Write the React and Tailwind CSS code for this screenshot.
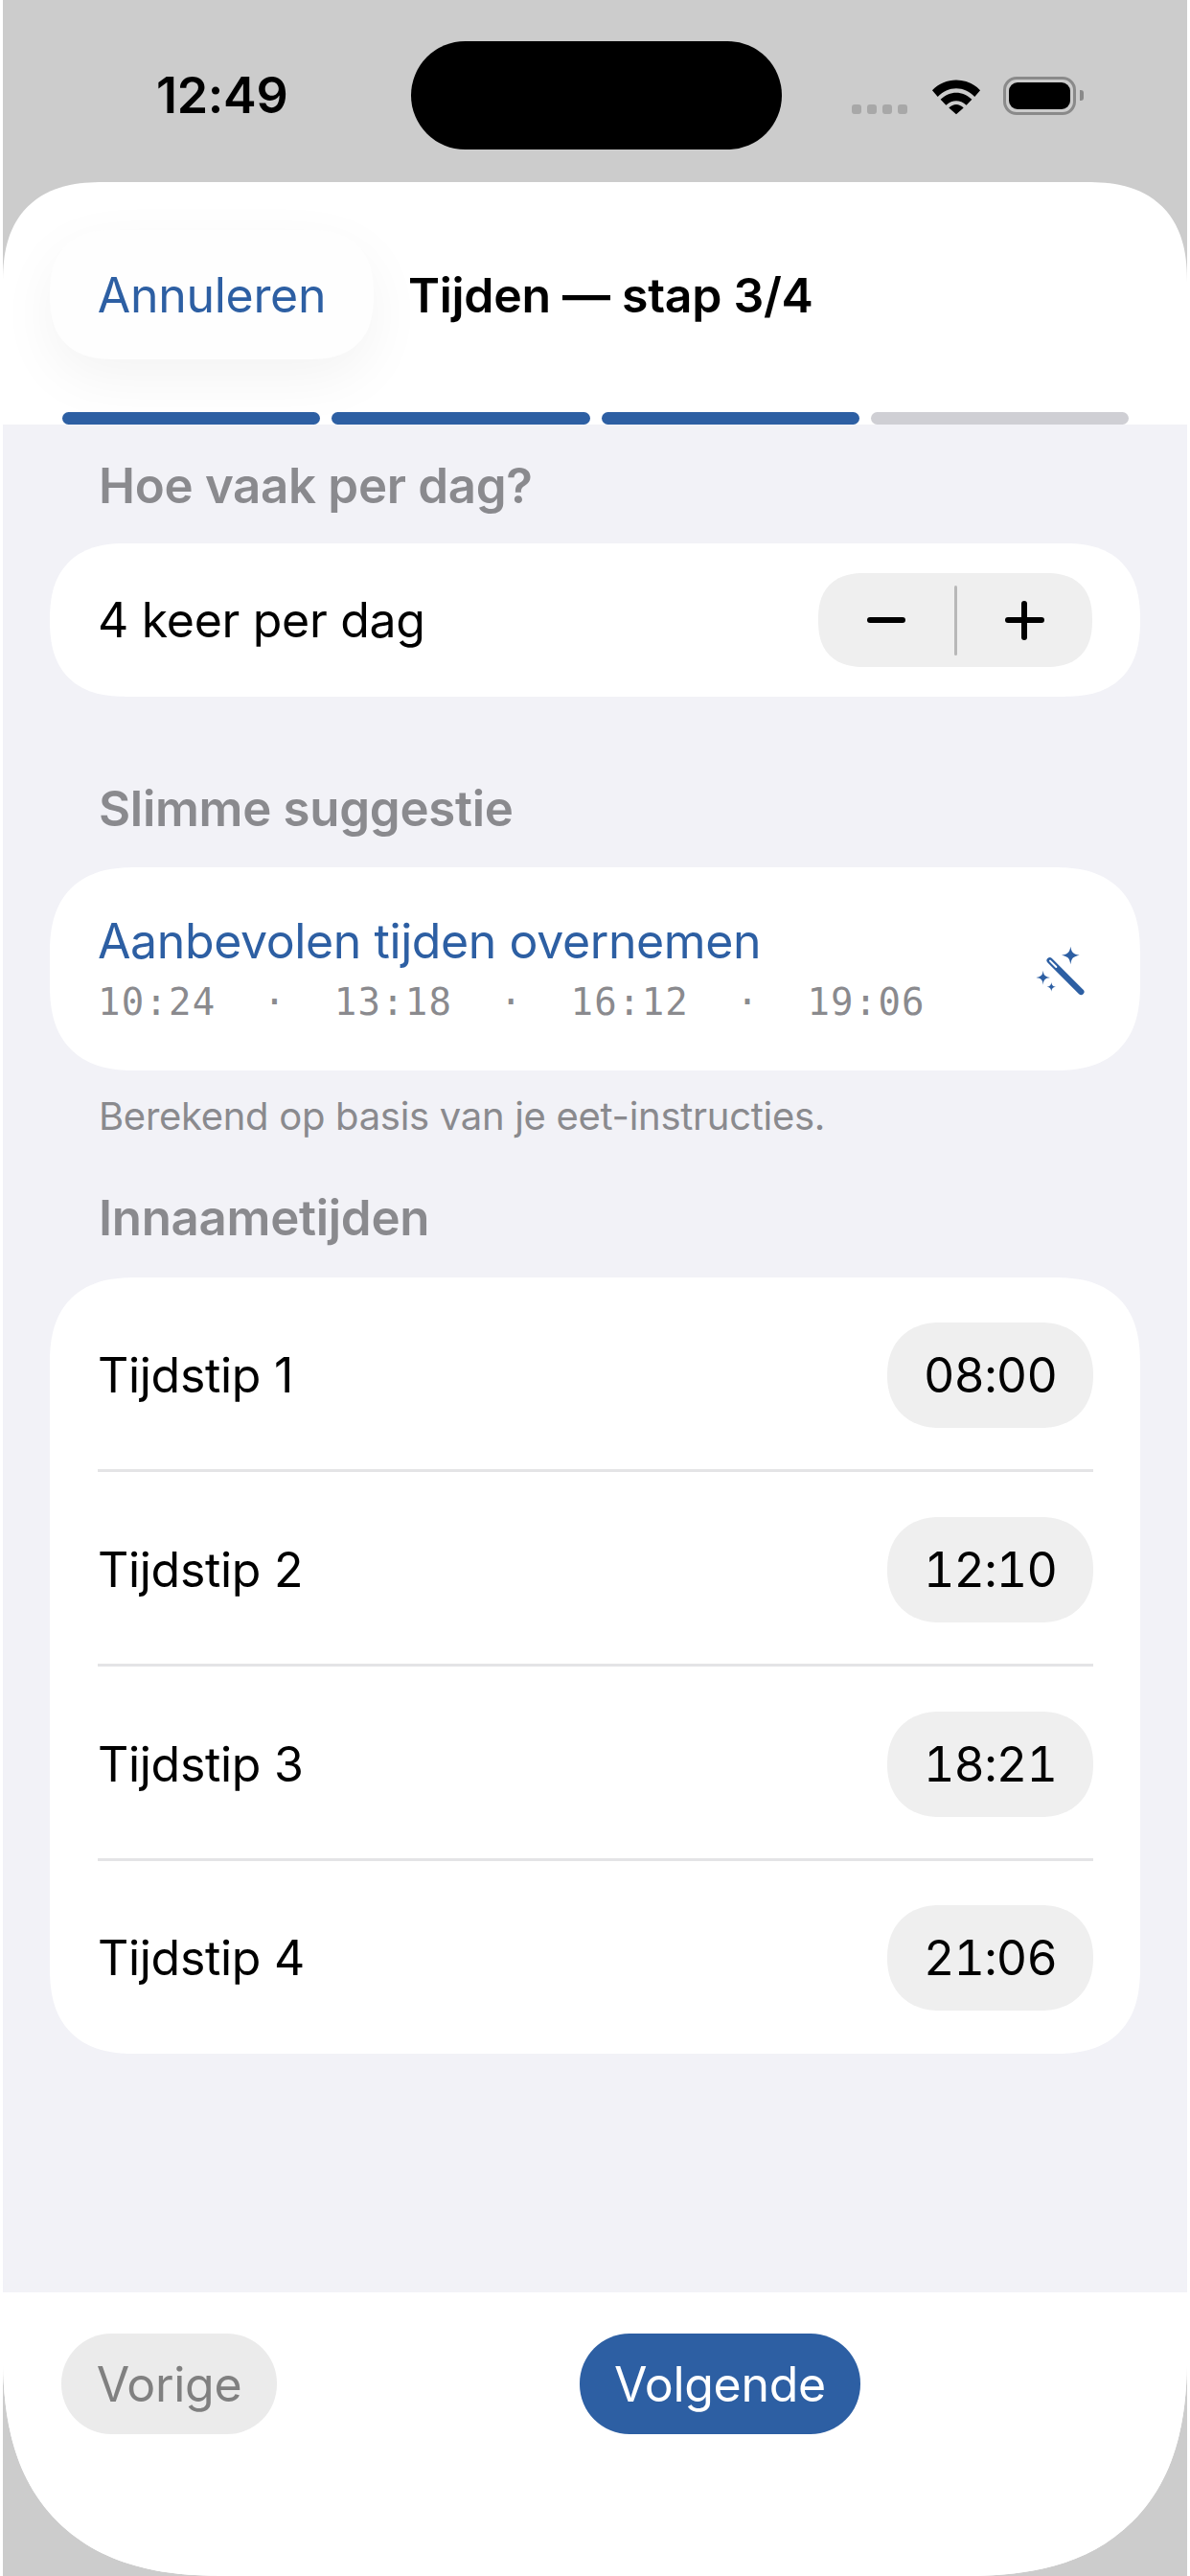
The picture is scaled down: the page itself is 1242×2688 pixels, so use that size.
const inter = { fontFamily: '"Inter", "Liberation Sans", sans-serif' };

function Wand() {
  return (
    <svg width="140" height="100" viewBox="0 0 420 300" className="-my-5 -mr-[29px] -ml-[44px] shrink-0">
      <path d="M197 124 L295 222" stroke="#2d5fa3" strokeWidth="19" strokeLinecap="round" fill="none" />
      <path d="M198 125 L217 144" stroke="#fff" strokeWidth="6" strokeLinecap="round" fill="none" />
      <path d="M262 80 C265 98 270 103 290 107 C270 111 265 116 262 136 C259 116 254 111 234 107 C254 103 259 98 262 80Z" fill="#2d5fa3" />
      <path d="M176 155 C178 170 181 174 198 177 C181 180 178 184 176 200 C174 184 171 180 154 177 C171 174 174 170 176 155Z" fill="#2d5fa3" />
      <path d="M202 191 C203 201 206 204 216 206 C206 208 203 211 202 221 C201 211 198 208 188 206 C198 204 201 201 202 191Z" fill="#2d5fa3" />
    </svg>
  );
}

function Row({ label, time, last }) {
  return (
    <div className={"flex items-center justify-between relative " + (last ? "h-[201px]" : "h-[203px]")}>
      <span className="text-[50px] leading-none text-black">{label}</span>
      <span className="w-[215px] h-[110px] rounded-[55px] bg-[#efefef] flex items-center justify-center text-[50px] leading-none tracking-[-0.8px] text-black tabular-nums [corner-shape:superellipse(1.15)]">
        {time}
      </span>
      {!last && <div className="absolute left-0 right-0 bottom-0 h-[3px] bg-[#e4e4e6]" />}
    </div>
  );
}

function Label({ children, className }) {
  return <div className={"text-[51px] leading-[60px] font-semibold text-[#8a8a8e] pl-[100px] " + className}>{children}</div>;
}

export default function App() {
  return (
    <div style={inter} className="w-[1242px] h-[2688px] bg-white px-[3px] overflow-hidden tracking-[-0.3px]">
      <div className="h-full bg-[#cccccc] flex flex-col">
        {/* status bar */}
        <div className="h-[190px] shrink-0 relative">
          <div className="absolute left-[160px] top-[72px] text-[52px] leading-[56px] font-semibold text-black">12:49</div>
          <div className="absolute left-[426px] top-[43px] w-[387px] h-[113px] rounded-[57px] bg-black" />
          <div className="absolute left-[886px] top-[109px] flex gap-[6px]">
            <div className="w-[10px] h-[10px] rounded-[3px] bg-[#a8a8a8]" />
            <div className="w-[10px] h-[10px] rounded-[3px] bg-[#a8a8a8]" />
            <div className="w-[10px] h-[10px] rounded-[3px] bg-[#a8a8a8]" />
            <div className="w-[10px] h-[10px] rounded-[3px] bg-[#a8a8a8]" />
          </div>
          <svg className="absolute left-[969px] top-[80px]" width="52" height="40" viewBox="0 0 54 40">
            <path d="M1 14 C15 -1 39 -1 53 14 L47 21 C36 9 18 9 7 21Z" fill="#000" />
            <path d="M10 24 C20 14 34 14 44 24 L38 30 C31 24 23 24 16 30Z" fill="#000" />
            <path d="M19 33 C24 28 30 28 35 33 L27 40Z" fill="#000" />
          </svg>
          <div className="absolute left-[1044px] top-[80px] w-[76px] h-[40px] rounded-[14px] border-[3px] border-[#8a8a8a] p-[3px]">
            <div className="w-full h-full rounded-[9px] bg-black" />
          </div>
          <div className="absolute left-[1124px] top-[94px] w-[4px] h-[11px] rounded-r-[3px] bg-[#8a8a8a]" />
        </div>

        {/* sheet */}
        <div className="flex-1 bg-white rounded-t-[105px] rounded-b-[232px] [corner-shape:superellipse(1.3)] overflow-hidden flex flex-col">
          <div className="h-[253px] shrink-0 flex flex-col">
            <div className="flex items-center pl-[49px] pt-[50px]">
              <div className="w-[338px] h-[135px] rounded-[67px] bg-[#fefefe] shadow-[0_20px_60px_rgba(0,0,0,0.05)] [corner-shape:superellipse(1.3)] flex items-center justify-center text-[50px] leading-none text-[#2d5fa3]">
                Annuleren
              </div>
              <div className="ml-[36px] text-[50px] leading-none font-semibold text-black">Tijden — stap 3/4</div>
            </div>
            <div className="mt-auto flex gap-[12px] pl-[62px] pr-[61px]">
              <div className="flex-1 h-[13px] rounded-full bg-[#2d5fa3]" />
              <div className="flex-1 h-[13px] rounded-full bg-[#2d5fa3]" />
              <div className="flex-1 h-[13px] rounded-full bg-[#2d5fa3]" />
              <div className="flex-1 h-[13px] rounded-full bg-[#cfcfd4]" />
            </div>
          </div>

          <div className="flex-1 bg-[#f2f2f7] flex flex-col pt-[34px]">
            <Label>Hoe vaak per dag?</Label>
            <div className="mx-[49px] mt-[30px] h-[160px] rounded-[80px] bg-white [corner-shape:superellipse(1.3)] flex items-center justify-between pl-[50px] pr-[50px]">
              <span className="text-[50px] leading-none text-black">4 keer per dag</span>
              <div className="w-[286px] h-[98px] rounded-[49px] bg-[#efefef] [corner-shape:superellipse(1.3)] flex items-center">
                <div className="flex-1 flex justify-center">
                  <div className="w-[40px] h-[6px] rounded-full bg-black" />
                </div>
                <div className="w-[3px] h-[73px] rounded-full bg-[#b8b8b8]" />
                <div className="flex-1 flex justify-center relative">
                  <div className="w-[41px] h-[6px] rounded-full bg-black" />
                  <div className="absolute top-[-17px] w-[6px] h-[41px] rounded-full bg-black" />
                </div>
              </div>
            </div>

            <Label className="mt-[87px]">Slimme suggestie</Label>
            <div className="mx-[49px] mt-[31px] h-[212px] rounded-[90px] bg-white [corner-shape:superellipse(1.3)] flex items-center justify-between pl-[50px] pr-[49px]">
              <div className="flex flex-col">
                <span className="text-[50px] leading-[60px] tracking-[-0.4px] text-[#2d5fa3]">Aanbevolen tijden overnemen</span>
                <span className="mt-[9px] text-[39px] leading-[50px] tracking-[1.2px] text-[#8a8a8e] whitespace-pre font-['DejaVu_Sans_Mono',monospace]">
                  {"10:24  ·  13:18  ·  16:12  ·  19:06"}
                </span>
              </div>
              <Wand />
            </div>
            <div className="text-[40px] leading-[48px] text-[#8a8a8e] pl-[100px] mt-[24px]">Berekend op basis van je eet-instructies.</div>

            <Label className="mt-[52px]">Innaametijden</Label>
            <div className="mx-[49px] mt-[32px] rounded-[90px] bg-white [corner-shape:superellipse(1.3)] pl-[50px] pr-[49px]">
              <Row label="Tijdstip 1" time="08:00" />
              <Row label="Tijdstip 2" time="12:10" />
              <Row label="Tijdstip 3" time="18:21" />
              <Row label="Tijdstip 4" time="21:06" last />
            </div>
          </div>

          <div className="h-[296px] shrink-0 bg-white flex items-start pt-[43px] pl-[61px]">
            <div className="w-[225px] h-[105px] rounded-[52px] bg-[#ebebeb] flex items-center justify-center text-[50px] leading-none text-[#808080]">Vorige</div>
            <div className="ml-[316px] w-[293px] h-[105px] rounded-[52px] bg-[#2d5fa3] flex items-center justify-center text-[50px] leading-none text-white">Volgende</div>
          </div>
        </div>
      </div>
    </div>
  );
}
